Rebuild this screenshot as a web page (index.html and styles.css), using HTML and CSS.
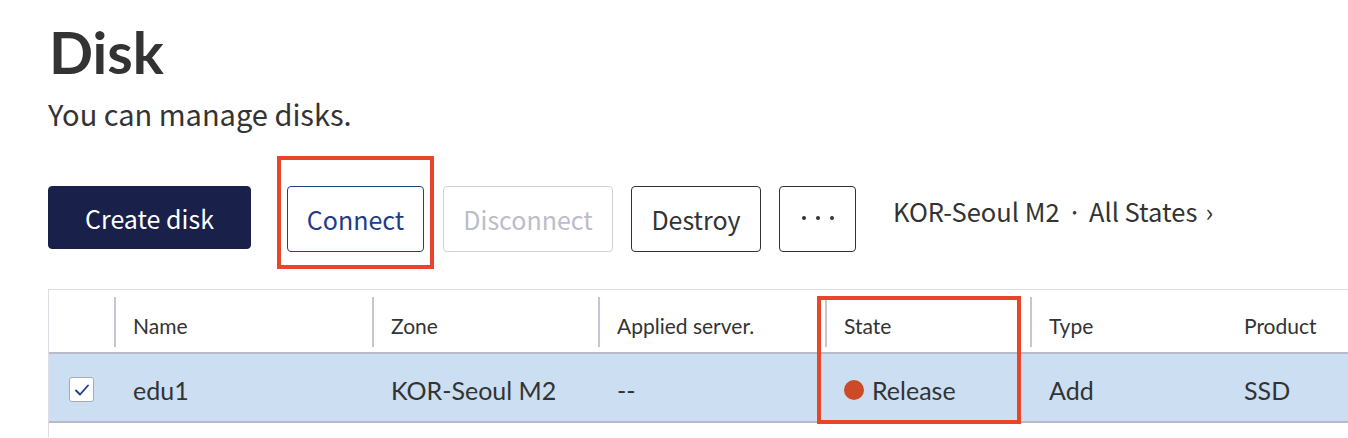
FILE: index.html
```html
<!DOCTYPE html>
<html lang="en">
<head>
<meta charset="utf-8">
<title>Disk</title>
<link rel="stylesheet" href="styles.css">
</head>
<body>
<main class="page">
  <h1 class="title">Disk</h1>
  <p class="subtitle">You can manage disks.</p>

  <div class="toolbar">
    <button class="btn btn-primary">Create disk</button>
    <span class="highlight-wrap highlight-connect">
      <button class="btn btn-connect">Connect</button>
    </span>
    <button class="btn btn-disabled">Disconnect</button>
    <button class="btn btn-default">Destroy</button>
    <button class="btn btn-default btn-more"><span class="dots"><i></i><i></i><i></i></span></button>
    <span class="filter">KOR-Seoul M2<span class="mid">&middot;</span>All States<span class="chev">&rsaquo;</span></span>
  </div>

  <div class="table">
    <div class="row head">
      <div class="cell chk"></div>
      <div class="cell sep">Name</div>
      <div class="cell sep">Zone</div>
      <div class="cell sep">Applied server.</div>
      <div class="cell sep">State</div>
      <div class="cell sep">Type</div>
      <div class="cell">Product</div>
    </div>
    <div class="row data selected">
      <div class="cell chk">
        <span class="checkbox">
          <svg width="16" height="14" viewBox="0 0 16 14"><path d="M2 7.5 L6 11.5 L14 2.5" fill="none" stroke="#1e3a8a" stroke-width="1.8" stroke-linecap="round" stroke-linejoin="round"/></svg>
        </span>
      </div>
      <div class="cell">edu1</div>
      <div class="cell">KOR-Seoul M2</div>
      <div class="cell">--</div>
      <div class="cell"><span class="dot"></span>Release</div>
      <div class="cell">Add</div>
      <div class="cell">SSD</div>
    </div>
    <div class="rest"></div>
    <div class="highlight-state"></div>
  </div>
</main>
</body>
</html>
```

FILE: styles.css
```css
* { box-sizing: border-box; }
html, body { margin: 0; padding: 0; background: #fff; }
body { overflow: hidden; }

.page {
  padding: 0 0 0 48px;
  color: #333;
}

.title {
  font-family: "Lato", "Noto Sans", sans-serif;
  font-weight: 700;
  font-size: 58px;
  line-height: 70px;
  margin: 17px 0 0 1px;
  color: #333;
}

.subtitle {
  font-family: "Noto Sans CJK KR", "Noto Sans", sans-serif;
  font-size: 29px;
  line-height: 40px;
  margin: 6px 0 0 0;
  color: #333;
}

.toolbar {
  display: flex;
  align-items: flex-start;
  margin-top: 53px;
  height: 66px;
}

.btn {
  font-family: "Noto Sans CJK KR", "Noto Sans", sans-serif;
  font-size: 25px;
  height: 66px;
  border-radius: 4px;
  background: #fff;
  border: 1px solid #333;
  color: #333;
  padding: 0;
  margin: 0 18px 0 0;
  display: flex;
  align-items: center;
  justify-content: center;
}

.btn-primary {
  background: #19204a;
  border-color: #19204a;
  color: #fff;
  width: 203px;
  height: 63px;
  margin-right: 36px;
}

.highlight-wrap {
  position: relative;
  display: block;
  margin-right: 19px;
}
.highlight-wrap .btn { margin-right: 0; }

.highlight-connect::after {
  content: "";
  position: absolute;
  top: -30px;
  left: -10px;
  right: -10px;
  bottom: -17px;
  border: 4px solid #e9452b;
}

.btn-connect {
  width: 137px;
  border-color: #1e3f8a;
  color: #1d3c87;
}

.btn-disabled {
  width: 170px;
  border-color: #d2d2da;
  color: #bcbcca;
}

.btn-default { width: 130px; }

.btn-more {
  width: 77px;
  margin-right: 37px;
}

.dots {
  display: flex;
  gap: 10px;
  margin-top: -3px;
}
.dots i {
  display: block;
  width: 4px;
  height: 4px;
  border-radius: 50%;
  background: #333;
}

.filter {
  font-family: "Noto Sans CJK KR", "Noto Sans", sans-serif;
  font-size: 25.5px;
  color: #333;
  line-height: 50px;
  white-space: nowrap;
}
.mid { margin: 0 7px 0 8px; }
.chev { margin-left: 8px; }

.table {
  position: relative;
  margin-top: 37px;
  border-top: 1px solid #dcdce2;
  border-left: 1px solid #dcdce2;
  font-family: "Lato", "Noto Sans", sans-serif;
  color: #333;
}

.row {
  display: grid;
  grid-template-columns: 65px 258px 226px 227px 205px 195px 1fr;
}

.head {
  height: 64px;
  border-bottom: 2px solid #b9bbc8;
  font-size: 21px;
}

.cell {
  display: flex;
  align-items: center;
  padding-left: 19px;
  white-space: nowrap;
}

.head .cell.sep {
  position: relative;
}
.head .cell.sep::before {
  content: "";
  position: absolute;
  left: 0;
  top: 7px;
  bottom: 5px;
  border-left: 2px solid #c5c6d0;
}

.head .cell { padding-top: 8px; }

.data {
  height: 69px;
  background: #cbdef2;
  border-bottom: 2px solid #b9bbc8;
  font-size: 25px;
}
.data .cell { padding-top: 4px; }

.chk { padding-left: 20px; }

.checkbox {
  width: 25px;
  height: 25px;
  background: #fff;
  border: 1.5px solid #a8aab8;
  border-radius: 3px;
  display: flex;
  align-items: center;
  justify-content: center;
}

.dot {
  width: 20px;
  height: 20px;
  border-radius: 50%;
  background: #cc4a28;
  margin-right: 8px;
}

.rest { height: 14px; }

.highlight-state {
  position: absolute;
  left: 768px;
  top: 6px;
  width: 204px;
  height: 128px;
  border: 4px solid #e9452b;
}
```
